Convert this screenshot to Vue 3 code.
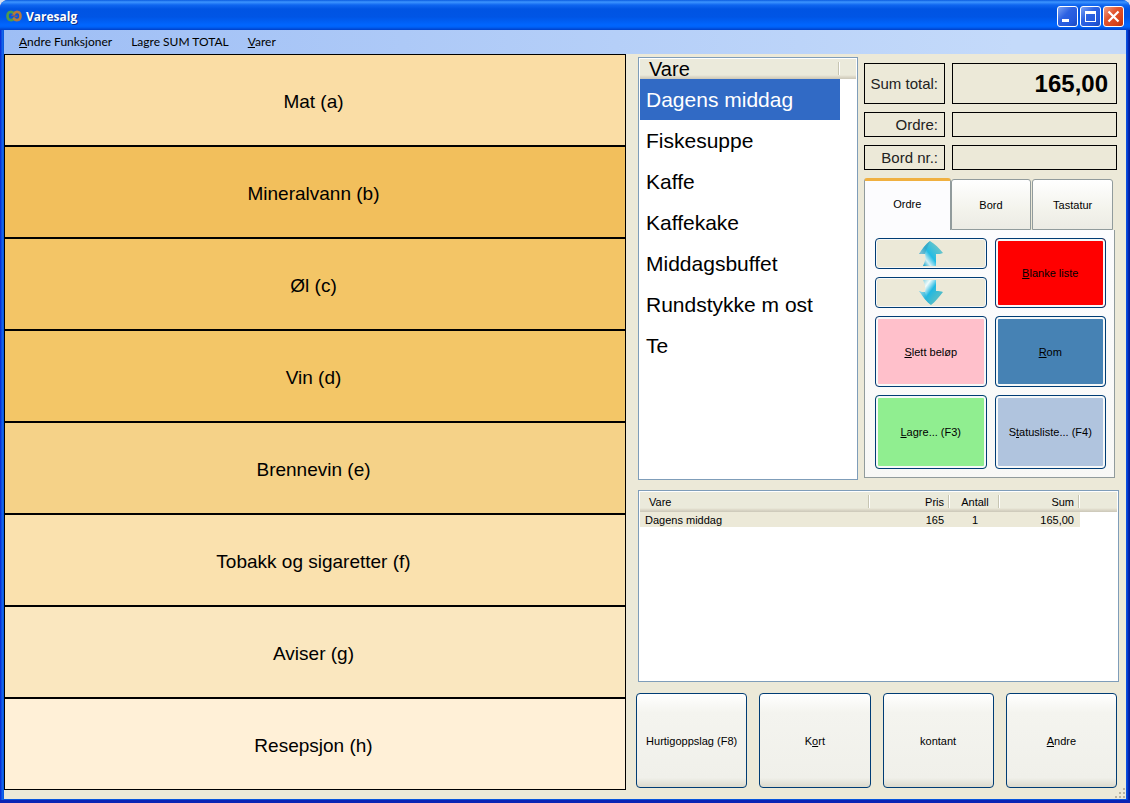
<script setup>
import { ref } from 'vue'

const menus = [
  ['', 'A', 'ndre Funksjoner'],
  ['La', 'g', 're SUM TOTAL'],
  ['', 'V', 'arer'],
]
const categories = [
  { name: 'Mat (a)', tone: 'tone-a' },
  { name: 'Mineralvann (b)', tone: 'tone-b' },
  { name: 'Øl (c)', tone: 'tone-c' },
  { name: 'Vin (d)', tone: 'tone-d' },
  { name: 'Brennevin (e)', tone: 'tone-e' },
  { name: 'Tobakk og sigaretter (f)', tone: 'tone-f' },
  { name: 'Aviser (g)', tone: 'tone-g' },
  { name: 'Resepsjon (h)', tone: 'tone-h' },
]
const items = ['Dagens middag', 'Fiskesuppe', 'Kaffe', 'Kaffekake', 'Middagsbuffet', 'Rundstykke m ost', 'Te']
const selected = ref(0)
const tabs = ['Ordre', 'Bord', 'Tastatur']
const activeTab = ref(0)
const total = ref('165,00')
const order = ref('')
const tableNo = ref('')
const lines = [{ item: 'Dagens middag', price: '165', count: '1', sum: '165,00' }]
const actions = [
  { pre: '', key: 'B', post: 'lanke liste', cls: 'red' },
  { pre: '', key: 'S', post: 'lett beløp', cls: 'pink' },
  { pre: '', key: 'R', post: 'om', cls: 'blue' },
  { pre: '', key: 'L', post: 'agre... (F3)', cls: 'green' },
  { pre: 'S', key: 't', post: 'atusliste... (F4)', cls: 'steel' },
]
const payments = [
  ['Hurtigoppslag (F8)', '', ''],
  ['K', 'o', 'rt'],
  ['kontant', '', ''],
  ['', 'A', 'ndre'],
]
</script>

<template>
  <div class="window">
    <header class="titlebar">
      <svg class="logo" width="16" height="14" viewBox="0 0 16 14" fill="none" stroke-width="2.6" stroke-linecap="round">
        <path d="M8 5C6.500 2 1.500 2 1.500 7s5 5 6.500 2.500" stroke="#4f9a4c" />
        <path d="M8 9.500c1.500 2.500 6.500 2.500 6.500-2.500S9.500 2 8 5" stroke="#b5793c" />
        <path d="M6 6.500c2-1.500 3 2.500 5 .5" stroke="#8c5a63" stroke-width="1.500" />
      </svg>
      <h1>Varesalg</h1>
      <div class="controls">
        <button type="button" aria-label="Minimer">
          <svg width="19" height="19" viewBox="0 0 19 19"><path d="M4 12h7v3H4z" fill="#fff" /></svg>
        </button>
        <button type="button" aria-label="Maksimer">
          <svg width="19" height="19" viewBox="0 0 19 19"><path d="M4 4h11v11H4zM5 7v7h9V7z" fill="#fff" fill-rule="evenodd" /></svg>
        </button>
        <button type="button" class="close" aria-label="Lukk">
          <svg width="19" height="19" viewBox="0 0 19 19"><path d="M4.500 4.500l10 10M14.500 4.500l-10 10" stroke="#fff" stroke-width="2.200" /></svg>
        </button>
      </div>
    </header>

    <nav class="menubar">
      <button v-for="(m, i) in menus" :key="i" type="button">{{ m[0] }}<u>{{ m[1] }}</u>{{ m[2] }}</button>
    </nav>

    <main class="content">
      <section class="categories">
        <button v-for="c in categories" :key="c.name" type="button" :class="c.tone">{{ c.name }}</button>
      </section>

      <section class="register">
        <div class="upper">
          <div class="listbox">
            <table class="items">
              <thead><tr><th scope="col">Vare</th><th class="rest"></th></tr></thead>
              <tbody>
                <tr v-for="(it, i) in items" :key="it" @click="selected = i">
                  <td :class="{ selected: i === selected }">{{ it }}</td><td></td>
                </tr>
              </tbody>
            </table>
          </div>

          <div class="side">
            <div class="fields">
              <label class="big" for="total">Sum total:</label>
              <input id="total" v-model="total" class="big amount" readonly />
              <label for="order">Ordre:</label>
              <input id="order" v-model="order" />
              <label for="tableno">Bord nr.:</label>
              <input id="tableno" v-model="tableNo" />
            </div>

            <div class="tabs" role="tablist">
              <button v-for="(t, i) in tabs" :key="t" type="button" role="tab" :aria-selected="i === activeTab" :class="{ active: i === activeTab }" @click="activeTab = i">{{ t }}</button>
            </div>
            <div class="panel" role="tabpanel">
              <button type="button" class="framed arrow" aria-label="Opp">
                <svg width="26" height="27" viewBox="0 0 26 27">
                  <defs><linearGradient id="up" gradientUnits="userSpaceOnUse" x1="3" y1="22" x2="20" y2="9"><stop offset="0" stop-color="#1fa9cf" /><stop offset="0.250" stop-color="#d3eff4" /><stop offset="0.550" stop-color="#22bce4" /><stop offset="1" stop-color="#5fc3cd" /></linearGradient></defs>
                  <path d="M12 1c5 3 9 7 13 12-2 1-4 1-7 1v12H5c2-4 3-8 2-12H1C4 9 8 4 12 1z" fill="url(#up)" />
                  <path d="M12 1C8 4 4 9 1 14h6c1-4 3-8 5-13z" fill="#3a9fbd" fill-opacity=".6" />
                </svg>
              </button>
              <button type="button" class="framed arrow" aria-label="Ned">
                <svg width="26" height="27" viewBox="0 0 26 27">
                  <defs><linearGradient id="down" gradientUnits="userSpaceOnUse" x1="4" y1="4" x2="20" y2="16"><stop offset="0" stop-color="#9fdbe6" /><stop offset="0.250" stop-color="#f2fcfc" /><stop offset="0.600" stop-color="#20b8e2" /><stop offset="1" stop-color="#4cbccb" /></linearGradient></defs>
                  <path d="M5 1h13v11c3 0 5 0 7 1-4 5-8 10-12 13C9 23 5 18 1 12c2 1 4 1 6 1 1-4 0-8-2-12z" fill="url(#down)" />
                  <path d="M1 12c2 1 4 1 6 1 1 5 3 9 6 13C9 23 5 18 1 12z" fill="#2fb3d6" fill-opacity=".6" />
                </svg>
              </button>
              <button v-for="a in actions" :key="a.cls" type="button" class="framed" :class="a.cls"><span>{{ a.pre }}<u>{{ a.key }}</u>{{ a.post }}</span></button>
            </div>
          </div>
        </div>

        <div class="receipt">
          <table>
            <colgroup><col class="c-item" /><col class="c-price" /><col class="c-count" /><col class="c-sum" /><col class="c-rest" /></colgroup>
            <thead>
              <tr><th scope="col">Vare</th><th scope="col" class="right">Pris</th><th scope="col" class="center">Antall</th><th scope="col" class="right">Sum</th><th class="rest"></th></tr>
            </thead>
            <tbody>
              <tr v-for="l in lines" :key="l.item">
                <td>{{ l.item }}</td><td class="right">{{ l.price }}</td><td class="center">{{ l.count }}</td><td class="right">{{ l.sum }}</td><td class="rest"></td>
              </tr>
            </tbody>
          </table>
        </div>

        <div class="payments">
          <button v-for="(p, i) in payments" :key="i" type="button"><span>{{ p[0] }}<u>{{ p[1] }}</u>{{ p[2] }}</span></button>
        </div>
      </section>
      <svg class="grip" width="12" height="12" viewBox="0 0 12 12" fill="#b8b4a2"><path d="M9 1h2v2H9zM9 5h2v2H9zM5 5h2v2H5zM9 9h2v2H9zM5 9h2v2H5zM1 9h2v2H1z" /></svg>
    </main>
  </div>
</template>

<style>
body {
  background: #d8dff0;
}
</style>

<style scoped>
.window {
  box-sizing: border-box;
  min-height: 100vh;
  display: flex;
  flex-direction: column;
  padding: 0 4px 4px;
  background: linear-gradient(90deg, #0831d9 0, #0831d9 1px, #166aee 2px, #0855dd 4px, #0855dd calc(100% - 4px), #0a48e0 calc(100% - 3px), #001ea0 calc(100% - 1px));
  border-radius: 8px 8px 0 0;
  box-shadow: inset 0 -3px #0a24b4;
  font-family: "Liberation Sans", Arial, sans-serif;
  font-size: 11px;
  color: #000;
}
.window *, .window *::before {
  box-sizing: border-box;
}
button, input {
  font: inherit;
  color: inherit;
  margin: 0;
}
.titlebar {
  height: 30px;
  margin: 0 -4px;
  padding: 2px 6px 0 6px;
  display: flex;
  align-items: center;
  border-radius: 8px 8px 0 0;
  background: linear-gradient(#0a5be0 0, #3d95ff 2px, #0f66f0 5px, #0054e3 9px, #0055e5 17px, #0066ff 25px, #0062f8 27px, #0040c8 30px);
}
.logo {
  margin-right: 4px;
}
h1 {
  margin: 0;
  padding-top: 2px;
  flex: 1;
  font: bold 12px/16px "Open Sans", "Noto Sans", sans-serif;
  color: #fff;
  text-shadow: 1px 1px #0a2f8c;
}
.controls {
  display: flex;
  gap: 2px;
}
.controls button {
  width: 21px;
  height: 21px;
  padding: 0;
  display: grid;
  place-items: center;
  border: 1px solid #fff;
  border-radius: 3px;
  background: linear-gradient(135deg, #7ba2f4, #2d62e2 40%, #2358dc 75%, #1c49bd);
}
.controls .close {
  background: linear-gradient(135deg, #f0a088, #e2552f 40%, #d9431a 75%, #b83410);
}
.controls svg {
  display: block;
}
.menubar {
  height: 24px;
  padding-left: 7px;
  display: flex;
  align-items: center;
  gap: 3px;
  background: linear-gradient(90deg, #9ebef5, #c4dafa 90%);
}
.menubar button {
  padding: 0 8px;
  border: 0;
  background: none;
  font: 12px/20px Lato, "Noto Sans", sans-serif;
}
.content {
  position: relative;
  flex: 1;
  display: grid;
  grid-template-columns: 622fr 500fr;
  background: #ece9d8;
}
.categories {
  display: grid;
  grid-auto-rows: 1fr;
  margin-bottom: 9px;
}
.categories button {
  padding: 3px 3px 0 0;
  border: 1px solid #000;
  border-radius: 0;
  font-size: 19px;
}
.tone-a { background: #fadda5; }
.tone-b { background: #f2bf5c; }
.tone-c { background: #f3c566; }
.tone-d { background: #f3c667; }
.tone-e { background: #f5d288; }
.tone-f { background: #fae1ae; }
.tone-g { background: #fae7bf; }
.tone-h { background: #fff0d7; }
.register {
  display: flex;
  flex-direction: column;
  padding: 3px 7px 11px 12px;
}
.upper {
  flex: 1;
  display: flex;
  gap: 6px;
}
.listbox, .receipt {
  border: 1px solid #7f9db9;
  background: #fff;
  padding: 1px;
}
.listbox {
  flex: 1;
}
table {
  width: 100%;
  border-collapse: separate;
  border-spacing: 0;
  table-layout: fixed;
}
th, td {
  padding: 0;
  text-align: left;
  font-weight: normal;
  white-space: nowrap;
}
th {
  height: 20px;
  background: linear-gradient(#ebeadb 0, #ebeadb 80%, #dedaca 88%, #cbc7b8);
  position: relative;
}
th:not(.rest)::before {
  content: "";
  position: absolute;
  right: 0;
  top: 3px;
  bottom: 4px;
  width: 2px;
  border-left: 1px solid #c7c5b2;
  border-right: 1px solid #fff;
}
.items {
  font-size: 21px;
}
.items th {
  padding-left: 9px;
  font-size: 20px;
  line-height: 20px;
}
.items .rest {
  width: 16px;
}
.items td {
  height: 41px;
  padding-left: 6px;
}
.items td.selected {
  background: #316ac5;
  color: #fff;
}
.side {
  width: 255px;
  display: flex;
  flex-direction: column;
  padding: 6px 2px 2px 0;
}
.fields {
  display: grid;
  grid-template-columns: 81px 1fr;
  gap: 8px 7px;
}
.fields label, .fields input {
  height: 25px;
  border: 1px solid #000;
  border-radius: 0;
  background: none;
  text-align: right;
  font-size: 15px;
}
.fields label {
  padding-right: 6px;
  line-height: 23px;
  white-space: nowrap;
  color: #222;
}
.fields input {
  width: 100%;
  min-width: 0;
}
.fields .big {
  height: 41px;
  line-height: 39px;
}
.fields .amount {
  font-size: 24px;
  font-weight: bold;
  padding: 0 8px;
}
.tabs {
  display: flex;
  align-items: flex-end;
  gap: 1px;
  margin-top: 8px;
  padding-right: 4px;
}
.tabs button {
  flex: 80;
  height: 51px;
  padding: 0;
  border: 1px solid #919b9c;
  border-radius: 3px 3px 0 0;
  background: linear-gradient(#fff, #f3f3ec 60%, #ecebe4);
}
.tabs .active {
  flex: 86;
  height: 52px;
  padding-bottom: 4px;
  margin-right: -1px;
  border-top: 3px solid #f0b040;
  border-bottom: 0;
  background: #fcfcfe;
}
.panel {
  flex: 1;
  display: grid;
  grid-template-columns: 1fr 1fr;
  grid-template-rows: 31fr 31fr 71fr 74fr;
  gap: 8px;
  margin-right: 2px;
  padding: 8px 8px 8px 10px;
  border: 1px solid #919b9c;
  border-top: 0;
  background: linear-gradient(#fcfcfe, #f8f8f6);
}
.framed {
  padding: 0;
  border: 1px solid #003c74;
  border-radius: 4px;
  box-shadow: inset 0 0 0 2px #f6f8f8;
  background: #ece9d8;
}
.arrow {
  display: grid;
  place-items: center;
  grid-column: 1;
  box-shadow: inset 0 0 0 1px #f6f8f8;
}
.arrow svg {
  display: block;
}
.red {
  grid-column: 2;
  grid-row: 1 / 3;
  background: #f00;
}
.pink { background: #ffc0cb; }
.blue { background: #4682b4; }
.green { background: #90ee90; }
.steel { background: #b0c4de; }
.receipt {
  height: 192px;
  margin-top: 10px;
}
.receipt th {
  padding: 0 6px 0 9px;
}
.receipt td {
  height: 15px;
  padding: 0 6px 0 5px;
  background: #ece9d8;
}
.receipt td.rest {
  background: none;
}
.receipt .right {
  text-align: right;
}
.receipt .center {
  padding: 0;
  text-align: center;
}
.c-price, .c-sum { width: 80px; }
.c-count { width: 50px; }
.c-rest { width: 37px; }
.payments {
  display: grid;
  grid-template-columns: repeat(4, 1fr);
  gap: 12px;
  margin: 11px 2px 0 -2px;
}
.payments button {
  height: 95px;
  padding: 0;
  border: 1px solid #003c74;
  border-radius: 4px;
  background: linear-gradient(#fff, #f4f4ef 20%, #f0f0ea 90%, #dcdacd);
}
.grip {
  position: absolute;
  right: 0;
  bottom: 0;
}
</style>
